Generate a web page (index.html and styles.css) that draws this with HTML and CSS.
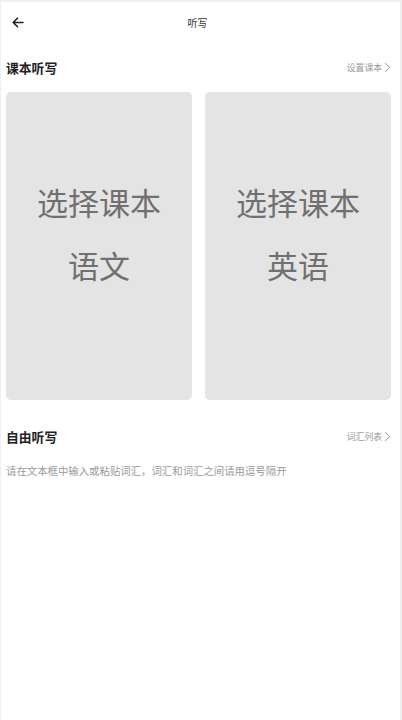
FILE: index.html
```html
<!DOCTYPE html>
<html lang="zh">
<head>
<meta charset="utf-8">
<link rel="stylesheet" href="styles.css">
</head>
<body>
<div class="page">
  <header class="topbar">
    <svg class="back" width="12" height="11" viewBox="0 0 12 11"><path d="M11 5.5H1.5M5.5 1.2L1.2 5.5L5.5 9.8" fill="none" stroke="#222" stroke-width="1.6" stroke-linecap="round" stroke-linejoin="round"/></svg>
    <div class="title">听写</div>
  </header>
  <div class="section-head head1">
    <div class="section-title">课本听写</div>
    <div class="link">设置课本<svg width="7" height="11" viewBox="0 0 7 11"><path d="M1.2 1L5.5 5.5L1.2 10" fill="none" stroke="#9a9a9a" stroke-width="1"/></svg></div>
  </div>
  <div class="cards">
    <div class="card"><div class="line">选择课本</div><div class="line">语文</div></div>
    <div class="card"><div class="line">选择课本</div><div class="line">英语</div></div>
  </div>
  <div class="section-head head2">
    <div class="section-title">自由听写</div>
    <div class="link">词汇列表<svg width="7" height="11" viewBox="0 0 7 11"><path d="M1.2 1L5.5 5.5L1.2 10" fill="none" stroke="#9a9a9a" stroke-width="1"/></svg></div>
  </div>
  <div class="hint">请在文本框中输入或粘贴词汇，词汇和词汇之间请用逗号隔开</div>
</div>
</body>
</html>
```
FILE: styles.css
```css
html, body {
  margin: 0;
  padding: 0;
  background: #fff;
}
body {
  font-family: "Noto Sans CJK SC", "Noto Sans", sans-serif;
}
.page {
  box-sizing: border-box;
  width: 402px;
  height: 720px;
  border-top: 2px solid #efefef;
  border-left: 1px solid #efefef;
  border-right: 2px solid #efefef;
  padding: 0 9px 0 5px;
  overflow: hidden;
}
.topbar {
  position: relative;
  height: 40px;
  display: flex;
  align-items: center;
}
.back {
  margin-left: 6px;
  margin-top: 1px;
}
.title {
  position: absolute;
  left: 0;
  right: 0;
  top: 0;
  bottom: 0;
  display: flex;
  align-items: center;
  justify-content: center;
  font-size: 10px;
  color: #333;
  padding-right: 2px;
  padding-top: 1px;
}
.section-head {
  display: flex;
  justify-content: space-between;
  align-items: center;
  height: 24px;
}
.head1 {
  margin-top: 13px;
}
.section-title {
  font-size: 12.8px;
  font-weight: 700;
  color: #222;
}
.link {
  display: flex;
  align-items: center;
  gap: 2px;
  font-size: 8.8px;
  color: #999;
}
.cards {
  display: grid;
  grid-template-columns: 186px 186px;
  column-gap: 13px;
  margin-top: 13px;
}
.card {
  height: 308px;
  background: #e4e4e4;
  border-radius: 5px;
  box-sizing: border-box;
  padding-top: 78px;
  display: flex;
  flex-direction: column;
  align-items: center;
}
.line {
  font-size: 31px;
  line-height: 63px;
  color: #707070;
}
.head2 {
  margin-top: 24px;
}
.hint {
  margin-top: 15px;
  font-size: 10.4px;
  color: #9a9a9a;
}
```
